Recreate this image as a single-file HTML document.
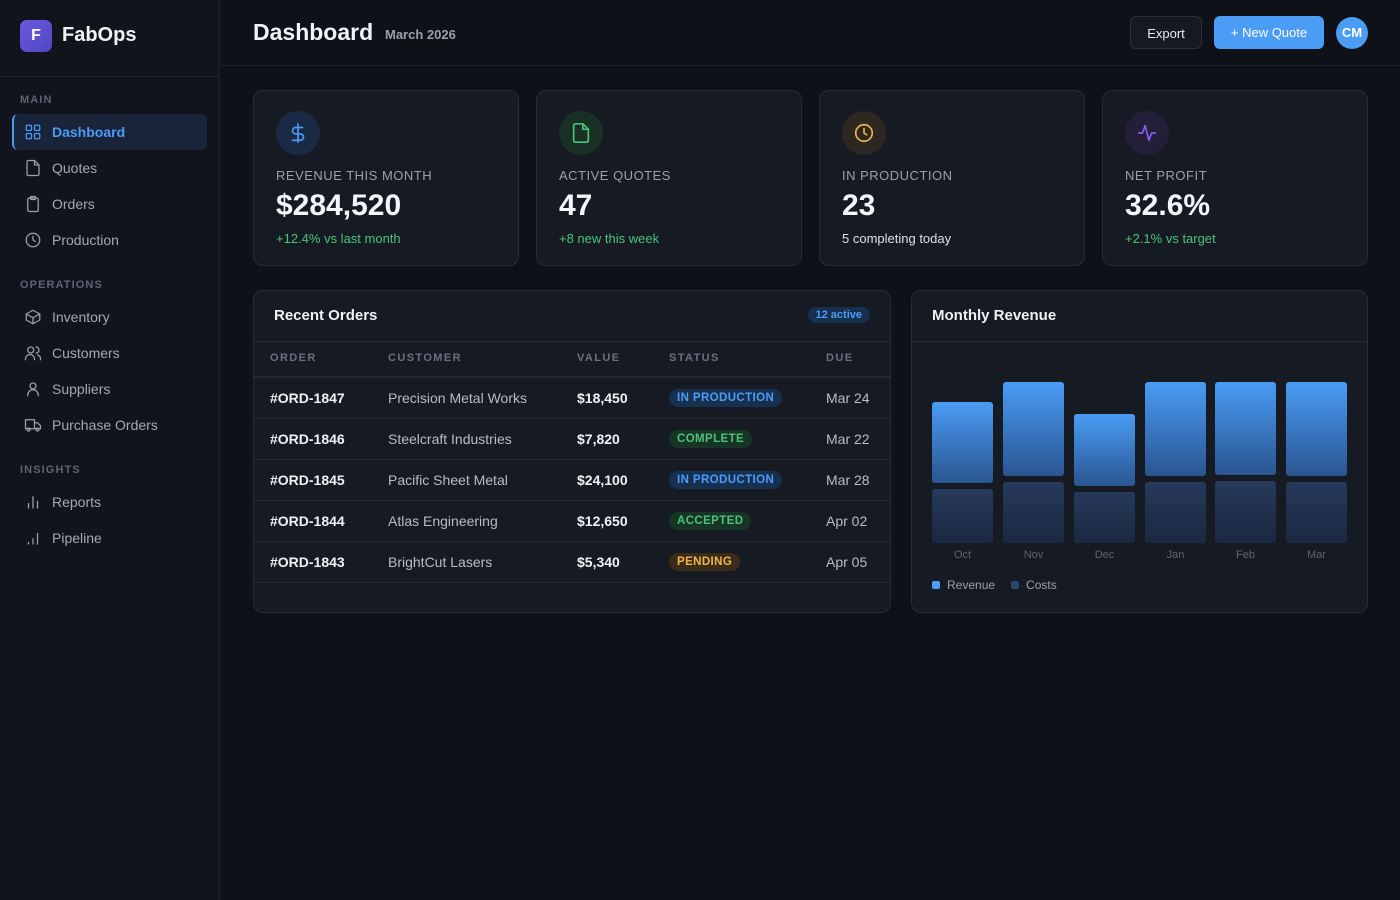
<!DOCTYPE html>
<html><head><meta charset="utf-8"><style>
*{box-sizing:border-box;margin:0;padding:0}
body{width:1400px;height:900px;background:#0e1118;font-family:"Liberation Sans",sans-serif;color:#e8eaf0;position:relative;overflow:hidden}
.sb{position:absolute;left:0;top:0;width:220px;height:900px;background:#11141c;border-right:1px solid #1e222c}
.logo{position:absolute;left:20px;top:20px;width:32px;height:32px;border-radius:7px;background:linear-gradient(135deg,#6a5be0,#5046c0);color:#fff;font-weight:bold;font-size:16px;text-align:center;line-height:32px}
.brand{position:absolute;left:62px;top:24px;font-size:20px;font-weight:bold;color:#f2f3f6}
.sdiv{position:absolute;left:0;top:76px;width:219px;border-top:1px solid #1f2330}
.sec{position:absolute;left:20px;font-size:11px;letter-spacing:1.1px;color:#5d6372;font-weight:bold}
.it{position:absolute;left:12px;width:195px;height:36px;display:flex;align-items:center;padding-left:12px;font-size:14px;color:#a3a8b5}
.it svg{width:18px;height:18px;margin-right:10px;stroke:#9aa0ad;fill:none;stroke-width:1.7;stroke-linecap:round;stroke-linejoin:round}
.it.act{background:#19243a;border-left:2px solid #4a9cf5;border-radius:6px;color:#4a9cf5;font-weight:bold;padding-left:10px}
.it.act svg{stroke:#4a9cf5}
.hd{position:absolute;left:221px;top:0;width:1179px;height:66px;border-bottom:1px solid #1e222c}
.title{position:absolute;left:253px;top:19px;font-size:23px;font-weight:bold;color:#f2f3f6}
.date{position:absolute;left:385px;top:27px;font-size:13px;color:#9aa0ad;font-weight:bold}
.btn{position:absolute;top:16px;height:33px;border-radius:6px;font-size:13px;line-height:33px;text-align:center}
.card{position:absolute;top:90px;width:266px;height:176px;background:#161a23;border:1px solid #272c37;border-radius:10px}
.ic{position:absolute;left:22px;top:20px;width:44px;height:44px;border-radius:50%;display:flex;align-items:center;justify-content:center}
.ic svg{width:22px;height:22px;fill:none;stroke-width:1.8;stroke-linecap:round;stroke-linejoin:round}
.lbl{position:absolute;left:22px;top:77px;font-size:13px;color:#9aa0ad;letter-spacing:.5px}
.val{position:absolute;left:22px;top:98px;font-size:30px;font-weight:bold;color:#f4f5f8}
.sub{position:absolute;left:22px;top:140px;font-size:13px;color:#4cc27a}
.panel{position:absolute;top:290px;height:323px;background:#161a23;border:1px solid #272c37;border-radius:10px;overflow:hidden}
.ph{height:51px;border-bottom:1px solid #252a35;padding:16px 20px;font-size:15px;font-weight:bold;color:#f0f1f4;position:relative}
.tb{position:absolute;left:0;width:637px;font-size:14px}
.row{position:absolute;left:0;width:637px;height:41px;border-bottom:1px solid #222733}
.row span{position:absolute;top:12px}
.c1{left:16px;font-weight:bold;color:#f0f1f4}.c2{left:134px;color:#b8bcc6}.c3{left:323px;font-weight:bold;color:#f0f1f4}.c5{left:572px;color:#b8bcc6}
.bd{left:415px;top:11px!important;font-size:11.5px;font-weight:bold;letter-spacing:.4px;padding:3px 8px;border-radius:9px}
.bp{background:#18304f;color:#4a9cf5}.bc{background:#163526;color:#4cc27a}.bw{background:#3a2c18;color:#f0b44c}
.th{position:absolute;top:61px;font-size:11px;letter-spacing:1.4px;color:#6a7080;font-weight:bold}
.bar{position:absolute;width:61px;border-radius:3px}
.rv{background:linear-gradient(#4a9cf5,#2a5590)}
.cs{background:linear-gradient(#263a5a,#1a2840)}
.ml{position:absolute;top:258px;width:61px;text-align:center;font-size:11px;color:#5d6372}
</style></head><body>
<div class="sb">
<div class="logo">F</div><div class="brand">FabOps</div>
<div class="sdiv"></div>
<div class="sec" style="top:94px">MAIN</div>
<div class="it act" style="top:114px"><svg viewBox="0 0 24 24"><rect x="3" y="3" width="7" height="7" rx="1.5"/><rect x="14" y="3" width="7" height="7" rx="1.5"/><rect x="3" y="14" width="7" height="7" rx="1.5"/><rect x="14" y="14" width="7" height="7" rx="1.5"/></svg>Dashboard</div>
<div class="it" style="top:150px"><svg viewBox="0 0 24 24"><path d="M14 2H6a2 2 0 0 0-2 2v16a2 2 0 0 0 2 2h12a2 2 0 0 0 2-2V8z"/><path d="M14 2v6h6"/></svg>Quotes</div>
<div class="it" style="top:186px"><svg viewBox="0 0 24 24"><rect x="5" y="4" width="14" height="18" rx="2"/><path d="M9 2h6v4H9z"/></svg>Orders</div>
<div class="it" style="top:222px"><svg viewBox="0 0 24 24"><circle cx="12" cy="12" r="9"/><path d="M12 7v5l3 2"/></svg>Production</div>
<div class="sec" style="top:279px">OPERATIONS</div>
<div class="it" style="top:299px"><svg viewBox="0 0 24 24"><path d="M21 8l-9-5-9 5v8l9 5 9-5z"/><path d="M3 8l9 5 9-5M12 13v8"/></svg>Inventory</div>
<div class="it" style="top:335px"><svg viewBox="0 0 24 24"><circle cx="9" cy="8" r="4"/><path d="M2 21v-1a6 6 0 0 1 12 0v1M16 4a4 4 0 0 1 0 8M22 21v-1a6 6 0 0 0-4-5.6"/></svg>Customers</div>
<div class="it" style="top:371px"><svg viewBox="0 0 24 24"><circle cx="12" cy="8" r="4"/><path d="M5 21v-1a7 7 0 0 1 14 0v1"/></svg>Suppliers</div>
<div class="it" style="top:407px"><svg viewBox="0 0 24 24"><path d="M2 5h12v12H2zM14 9h4l4 4v4h-8"/><circle cx="6" cy="18" r="2"/><circle cx="18" cy="18" r="2"/></svg>Purchase Orders</div>
<div class="sec" style="top:464px">INSIGHTS</div>
<div class="it" style="top:484px"><svg viewBox="0 0 24 24"><path d="M6 20v-6M12 20V5M18 20v-9"/></svg>Reports</div>
<div class="it" style="top:520px"><svg viewBox="0 0 24 24"><path d="M6 20v-2M12 20v-7M18 20V6"/></svg>Pipeline</div>
</div>
<div class="hd"></div>
<div class="title">Dashboard</div><div class="date">March 2026</div>
<div class="btn" style="left:1130px;width:72px;border:1px solid #2a2f3a;background:#151922;color:#e8eaf0">Export</div>
<div class="btn" style="left:1214px;width:110px;background:#4a9cf5;color:#fff">+ New Quote</div>
<div style="position:absolute;left:1336px;top:17px;width:32px;height:32px;border-radius:50%;background:#4a9cf5;color:#fff;font-weight:bold;font-size:13px;text-align:center;line-height:32px">CM</div>

<div class="card" style="left:253px"><div class="ic" style="background:#1a2a44"><svg viewBox="0 0 24 24" stroke="#4a9cf5"><path d="M12 2v20M17 6H9.5a3.5 3.5 0 0 0 0 7h5a3.5 3.5 0 0 1 0 7H6"/></svg></div><div class="lbl">REVENUE THIS MONTH</div><div class="val">$284,520</div><div class="sub">+12.4% vs last month</div></div>
<div class="card" style="left:536px"><div class="ic" style="background:#193026"><svg viewBox="0 0 24 24" stroke="#4cc27a"><path d="M14 2H6a2 2 0 0 0-2 2v16a2 2 0 0 0 2 2h12a2 2 0 0 0 2-2V8z"/><path d="M14 2v6h6"/></svg></div><div class="lbl">ACTIVE QUOTES</div><div class="val">47</div><div class="sub">+8 new this week</div></div>
<div class="card" style="left:819px"><div class="ic" style="background:#2c2720"><svg viewBox="0 0 24 24" stroke="#f0b44c"><circle cx="12" cy="12" r="9"/><path d="M12 7v5l3 2"/></svg></div><div class="lbl">IN PRODUCTION</div><div class="val">23</div><div class="sub" style="color:#dfe1e6">5 completing today</div></div>
<div class="card" style="left:1102px"><div class="ic" style="background:#231f38"><svg viewBox="0 0 24 24" stroke="#8b5cf6"><path d="M3 12h4l3-8 4 16 3-8h4"/></svg></div><div class="lbl">NET PROFIT</div><div class="val">32.6%</div><div class="sub">+2.1% vs target</div></div>

<div class="panel" style="left:253px;width:638px">
<div class="ph">Recent Orders<span style="position:absolute;right:20px;top:16px;font-size:11px;background:#18304f;color:#4a9cf5;padding:2px 8px;border-radius:9px;font-weight:bold">12 active</span></div>
<div style="position:absolute;left:0;top:51px;width:637px;height:36px;border-bottom:2px solid #222733"></div>
<span class="th" style="left:16px">ORDER</span><span class="th" style="left:134px">CUSTOMER</span><span class="th" style="left:323px">VALUE</span><span class="th" style="left:415px">STATUS</span><span class="th" style="left:572px">DUE</span>
<div class="row tb" style="top:87px"><span class="c1">#ORD-1847</span><span class="c2">Precision Metal Works</span><span class="c3">$18,450</span><span class="bd bp">IN PRODUCTION</span><span class="c5">Mar 24</span></div>
<div class="row tb" style="top:128px"><span class="c1">#ORD-1846</span><span class="c2">Steelcraft Industries</span><span class="c3">$7,820</span><span class="bd bc">COMPLETE</span><span class="c5">Mar 22</span></div>
<div class="row tb" style="top:169px"><span class="c1">#ORD-1845</span><span class="c2">Pacific Sheet Metal</span><span class="c3">$24,100</span><span class="bd bp">IN PRODUCTION</span><span class="c5">Mar 28</span></div>
<div class="row tb" style="top:210px"><span class="c1">#ORD-1844</span><span class="c2">Atlas Engineering</span><span class="c3">$12,650</span><span class="bd bc">ACCEPTED</span><span class="c5">Apr 02</span></div>
<div class="row tb" style="top:251px"><span class="c1">#ORD-1843</span><span class="c2">BrightCut Lasers</span><span class="c3">$5,340</span><span class="bd bw">PENDING</span><span class="c5">Apr 05</span></div>
</div>

<div class="panel" style="left:911px;width:457px">
<div class="ph">Monthly Revenue</div>
<div class="bar rv" style="left:20px;top:111px;height:81px"></div><div class="bar cs" style="left:20px;top:198px;height:54px"></div><div class="ml" style="left:20px">Oct</div>
<div class="bar rv" style="left:91px;top:91px;height:94px"></div><div class="bar cs" style="left:91px;top:191px;height:61px"></div><div class="ml" style="left:91px">Nov</div>
<div class="bar rv" style="left:162px;top:123px;height:72px"></div><div class="bar cs" style="left:162px;top:201px;height:51px"></div><div class="ml" style="left:162px">Dec</div>
<div class="bar rv" style="left:233px;top:91px;height:94px"></div><div class="bar cs" style="left:233px;top:191px;height:61px"></div><div class="ml" style="left:233px">Jan</div>
<div class="bar rv" style="left:303px;top:91px;height:93px"></div><div class="bar cs" style="left:303px;top:190px;height:62px"></div><div class="ml" style="left:303px">Feb</div>
<div class="bar rv" style="left:374px;top:91px;height:94px"></div><div class="bar cs" style="left:374px;top:191px;height:61px"></div><div class="ml" style="left:374px">Mar</div>
<div style="position:absolute;left:20px;top:287px;font-size:12px;color:#9aa0ad;display:flex;align-items:center"><span style="width:8px;height:8px;background:#4a9cf5;border-radius:2px;margin-right:7px"></span>Revenue<span style="width:8px;height:8px;background:#2a4670;border-radius:2px;margin:0 7px 0 16px"></span>Costs</div>
</div>
</body></html>
